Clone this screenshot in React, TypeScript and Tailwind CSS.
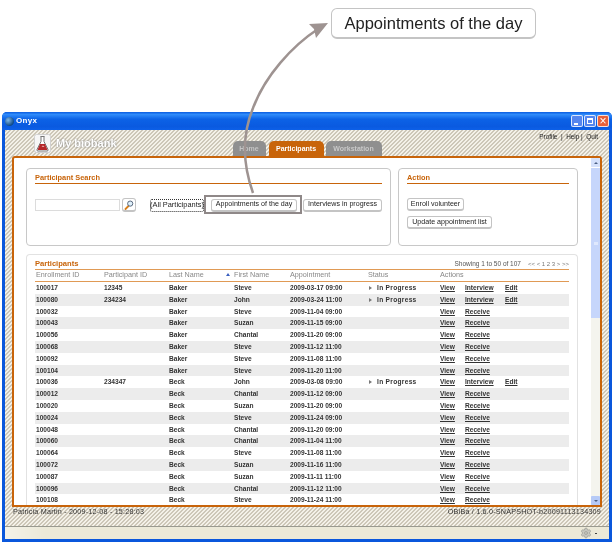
import { Settings } from "lucide-react";

type Row = {
  id: string;
  pid?: string;
  last: string;
  first: string;
  date: string;
  progress?: boolean;
};

const rows: Row[] = [
  { id: "100017", pid: "12345", last: "Baker", first: "Steve", date: "2009-03-17 09:00", progress: true },
  { id: "100080", pid: "234234", last: "Baker", first: "John", date: "2009-03-24 11:00", progress: true },
  { id: "100032", last: "Baker", first: "Steve", date: "2009-11-04 09:00" },
  { id: "100043", last: "Baker", first: "Suzan", date: "2009-11-15 09:00" },
  { id: "100056", last: "Baker", first: "Chantal", date: "2009-11-20 09:00" },
  { id: "100068", last: "Baker", first: "Steve", date: "2009-11-12 11:00" },
  { id: "100092", last: "Baker", first: "Steve", date: "2009-11-08 11:00" },
  { id: "100104", last: "Baker", first: "Steve", date: "2009-11-20 11:00" },
  { id: "100036", pid: "234347", last: "Beck", first: "John", date: "2009-03-08 09:00", progress: true },
  { id: "100012", last: "Beck", first: "Chantal", date: "2009-11-12 09:00" },
  { id: "100020", last: "Beck", first: "Suzan", date: "2009-11-20 09:00" },
  { id: "100024", last: "Beck", first: "Steve", date: "2009-11-24 09:00" },
  { id: "100048", last: "Beck", first: "Chantal", date: "2009-11-20 09:00" },
  { id: "100060", last: "Beck", first: "Chantal", date: "2009-11-04 11:00" },
  { id: "100064", last: "Beck", first: "Steve", date: "2009-11-08 11:00" },
  { id: "100072", last: "Beck", first: "Suzan", date: "2009-11-16 11:00" },
  { id: "100087", last: "Beck", first: "Suzan", date: "2009-11-11 11:00" },
  { id: "100096", last: "Beck", first: "Chantal", date: "2009-11-12 11:00" },
  { id: "100108", last: "Beck", first: "Steve", date: "2009-11-24 11:00" },
];

const columns = "grid grid-cols-[68px_66px_65px_56px_78px_72px_1fr] items-center";

function Btn({ label, className = "" }: { label: string; className?: string }) {
  return (
    <div
      className={`h-[13px] flex items-center px-[4px] bg-white rounded-[3px] border border-[#c4c4c4] border-b-2 text-[7.1px] text-[#222] whitespace-nowrap ${className}`}
    >
      {label}
    </div>
  );
}

function SectionTitle({ title }: { title: string }) {
  return (
    <div className="h-[11px] border-b border-[#c8640a] text-[7.4px] leading-[9px] font-bold text-[#c8640a]">
      {title}
    </div>
  );
}

function Flask() {
  return (
    <svg width="17" height="19" viewBox="0 0 17 19">
      <rect x="0.5" y="0.5" width="16" height="18" rx="2" fill="#f6f6f6" stroke="#d0d0d0" />
      <path d="M6.5 2.5h4M7 2.5v5L3 15.5q-.5 1.5 1 1.5h9q1.5 0 1-1.5L10 7.5v-5" fill="#fff" stroke="#777" strokeWidth="1" />
      <path d="M6 10h5l2.5 6h-10z" fill="#b5272a" />
      <path d="M7.5 12.5l1.5 -1 1.5 1.5z" fill="#f1d0d0" />
    </svg>
  );
}

function Magnifier() {
  return (
    <svg width="10" height="10" viewBox="0 0 10 10">
      <path d="M4.5 6L1.5 9" stroke="#d87f1c" strokeWidth="1.8" strokeLinecap="round" />
      <circle cx="6.2" cy="3.6" r="2.6" fill="#dff0fb" stroke="#4a5a70" strokeWidth="0.9" />
    </svg>
  );
}

function TableRow({ row, odd }: { row: Row; odd: boolean }) {
  return (
    <div className={`${columns} h-[11.8px] shrink-0 text-[6.6px] font-bold text-[#333] ${odd ? "bg-[#ececec]" : "bg-white"}`}>
      <div className="pl-[1px]">{row.id}</div>
      <div className="pl-[1px]">{row.pid}</div>
      <div>{row.last}</div>
      <div>{row.first}</div>
      <div>{row.date}</div>
      <div className="flex items-center">
        {row.progress && (
          <>
            <span className="w-0 h-0 ml-[1px] mr-[5px] border-y-[2px] border-y-transparent border-l-[3px] border-l-[#777]" />
            <span className="tracking-[0.3px]">In Progress</span>
          </>
        )}
      </div>
      <div className="flex items-center underline underline-offset-[1px]">
        <span className="w-[25px]">View</span>
        {row.progress ? (
          <>
            <span className="w-[40px]">Interview</span>
            <span>Edit</span>
          </>
        ) : (
          <span>Receive</span>
        )}
      </div>
    </div>
  );
}

export default function App() {
  return (
    <div className="relative w-[614px] h-[542px] overflow-hidden bg-white pt-[112px] px-[2px] flex flex-col font-['Liberation_Sans',Arial,sans-serif]">
      {/* Window */}
      <div className="flex-1 min-h-0 flex flex-col blur-[0.3px] rounded-t-[5px] bg-[#0a57dc] px-[3px] pb-[3px]">
        {/* Title bar */}
        <div className="h-[18px] shrink-0 -mx-[3px] px-[3px] rounded-t-[5px] flex items-center bg-[linear-gradient(180deg,#0a5ce0_0%,#2f8bfa_14%,#0c62e6_40%,#0a5ae0_80%,#0d60e8_100%)]">
          <span className="w-[9px] h-[9px] rounded-full bg-[radial-gradient(circle_at_35%_35%,#7fb7e8,#0f4a86_70%)]" />
          <span className="ml-[2px] text-[8px] font-bold text-white tracking-[0.3px]">Onyx</span>
          <div className="ml-auto flex gap-[1px]">
            <div className="w-[12px] h-[12px] rounded-[2px] border border-white/80 bg-[#5585ee] flex items-end pl-[2px] pb-[1px]">
              <span className="w-[4px] h-[2px] bg-white" />
            </div>
            <div className="w-[12px] h-[12px] rounded-[2px] border border-white/80 bg-[#5585ee] p-[2px]">
              <div className="w-full h-full border border-white border-t-2" />
            </div>
            <div className="w-[12px] h-[12px] rounded-[2px] border border-white/80 bg-[#e8603a] flex items-center justify-center text-[12px] leading-none text-white">
              ×
            </div>
          </div>
        </div>

        {/* Client area */}
        <div className="flex-1 min-h-0 flex flex-col bg-[linear-gradient(135deg,#cdc7b8_25%,#f4f1e8_25%,#f4f1e8_50%,#cdc7b8_50%,#cdc7b8_75%,#f4f1e8_75%)] bg-[length:4px_4px]">
          {/* Header */}
          <div className="h-[26px] shrink-0 flex items-start relative pl-[29px] pr-[11px]">
            <div className="mt-[4px]">
              <Flask />
            </div>
            <span className="ml-[5px] mt-[7px] text-[11px] leading-[13px] font-bold text-white [text-shadow:0_0_2px_#777]">
              My biobank
            </span>
            <div className="ml-[116px] mt-[11px] flex items-end text-[7px] font-bold leading-[15px] gap-[3px]">
              <div className="w-[33px] h-[15px] rounded-t-[5px] bg-[#8f8f8f] text-[#c4c4c4] text-center">Home</div>
              <div className="w-[55px] h-[15px] rounded-t-[5px] bg-[#c8640a] text-white text-center">Participants</div>
              <div className="w-[56px] h-[15px] rounded-t-[5px] bg-[#8f8f8f] text-[#c9c9c9] text-center -ml-[1px]">Workstation</div>
            </div>
            <div className="ml-auto mt-[3px] text-[6.4px] leading-[8px] font-medium text-[#222] whitespace-nowrap">
              Profile&nbsp;&nbsp;|&nbsp;&nbsp;Help&nbsp;|&nbsp;&nbsp;Quit
            </div>
          </div>

          {/* Orange panel */}
          <div className="h-[351px] shrink-0 mx-[7px] border-2 border-[#c8640a] rounded-t-[3px] bg-white flex overflow-hidden">
            <div className="flex-1 min-w-0 pl-[12px] pr-[13px] pt-[10px] flex flex-col gap-[8px]">
              <div className="flex gap-[7px] shrink-0">
                {/* Search box */}
                <div className="w-[365px] h-[78px] border border-[#c8c8c8] rounded-[4px] px-[8px] pt-[4px]">
                  <SectionTitle title="Participant Search" />
                  <div className="mt-[14px] flex items-center">
                    <div className="w-[85px] h-[12px] border border-[#dcdcdc] bg-white" />
                    <div className="ml-[2px] w-[14px] h-[14px] rounded-[3px] border border-[#c4c4c4] border-b-2 flex items-center justify-center">
                      <Magnifier />
                    </div>
                    <div className="ml-[14px] h-[13px] w-[54px] flex items-center justify-center border border-dotted border-[#333] rounded-[2px] text-[7.4px] text-[#222] whitespace-nowrap">
                      (All Participants)
                    </div>
                    <div className="relative ml-[7px]">
                      <Btn label="Appointments of the day" className="w-[86px] justify-center" />
                      <div className="absolute -left-[7px] -right-[5px] -top-[4px] -bottom-[2px] border-[2.5px] border-[#8f8888] pointer-events-none" />
                    </div>
                    <Btn label="Interviews in progress" className="ml-[6px] w-[79px] justify-center" />
                  </div>
                </div>
                {/* Action box */}
                <div className="w-[180px] h-[78px] border border-[#c8c8c8] rounded-[4px] px-[8px] pt-[4px]">
                  <SectionTitle title="Action" />
                  <div className="mt-[14px] flex flex-col items-start gap-[5px]">
                    <Btn label="Enroll volunteer" className="w-[57px] justify-center" />
                    <Btn label="Update appointment list" className="w-[85px] justify-center" />
                  </div>
                </div>
              </div>

              {/* Participants box */}
              <div className="flex-1 min-h-0 w-[552px] border border-b-0 border-[#e2e2e2] rounded-t-[4px] px-[8px] pt-[4px] flex flex-col overflow-hidden">
                <div className="h-[10px] shrink-0 flex items-center justify-between">
                  <span className="text-[7.6px] font-bold text-[#c8640a]">Participants</span>
                  <span className="text-[6.5px] text-[#555] whitespace-nowrap">
                    Showing 1 to 50 of 107
                    <span className="ml-[7px] text-[6px] text-[#777]">&lt;&lt; &lt; 1 2 3 &gt; &gt;&gt;</span>
                  </span>
                </div>
                <div className={`${columns} h-[13px] shrink-0 border-y border-[#e09a55] text-[7.2px] text-[#888]`}>
                  <div className="pl-[1px]">Enrollment ID</div>
                  <div className="pl-[1px]">Participant ID</div>
                  <div className="relative">
                    Last Name
                    <span className="absolute right-[4px] top-[3px] w-0 h-0 border-x-[2px] border-x-transparent border-b-[3px] border-b-[#3a5fc0]" />
                  </div>
                  <div>First Name</div>
                  <div>Appointment</div>
                  <div>Status</div>
                  <div>Actions</div>
                </div>
                {rows.map((row, i) => (
                  <TableRow key={row.id} row={row} odd={i % 2 === 1} />
                ))}
              </div>
            </div>

            {/* Scrollbar */}
            <div className="w-[9px] shrink-0 flex flex-col bg-[#f4f4ee]">
              <div className="h-[9px] shrink-0 bg-[#d6e2fc] rounded-[1px] flex items-center justify-center">
                <span className="w-0 h-0 border-x-[2px] border-x-transparent border-b-[2px] border-b-[#4d6185]" />
              </div>
              <div className="h-[151px] shrink-0 bg-[#c6d6fb] border-t border-white flex items-center justify-center">
                <span className="w-[4px] h-[3px] bg-[#dfe8fd]" />
              </div>
              <div className="flex-1" />
              <div className="h-[9px] shrink-0 bg-[#b6caf7] rounded-[1px] flex items-center justify-center">
                <span className="w-0 h-0 border-x-[2px] border-x-transparent border-t-[2px] border-t-[#4d6185]" />
              </div>
            </div>
          </div>

          {/* Footer strip */}
          <div className="h-[20px] shrink-0 border-b border-[#9a9a90] px-[8px] pt-[1px] flex justify-between text-[7.2px] leading-[8px] text-[#333] tracking-[0.2px] whitespace-nowrap">
            <span>Patricia Martin - 2009-12-08 - 15:28:03</span>
            <span>OBiBa / 1.6.0-SNAPSHOT-b20091113134309</span>
          </div>

          {/* Status bar */}
          <div className="flex-1 min-h-0 bg-[linear-gradient(90deg,#f4f2e8_0,#ece9d8_40px)] flex items-center justify-end pr-[5px]">
            <Settings size={12} className="text-[#a8a8a0] fill-[#c8c8c0]" />
            <span className="ml-[3px] mr-[7px] w-[2px] h-[1px] bg-[#444]" />
          </div>
        </div>
      </div>

      {/* Annotation: arrow and callout */}
      <svg className="absolute left-0 top-0 pointer-events-none" width="614" height="200" viewBox="0 0 614 200">
        <path d="M253 193C243 165 242 135 253 108C265 76 292 46 318 29" fill="none" stroke="#9e9391" strokeWidth="2.5" />
        <path d="M328 23L309 24L314 29L316 38Z" fill="#9e9391" />
      </svg>
      <div className="absolute left-[331px] top-[8px] w-[205px] h-[31px] rounded-[6px] border border-[#c4c4c4] border-b-2 bg-white flex items-center justify-center text-[16.5px] text-[#222] blur-[0.2px] whitespace-nowrap">
        Appointments of the day
      </div>
    </div>
  );
}
